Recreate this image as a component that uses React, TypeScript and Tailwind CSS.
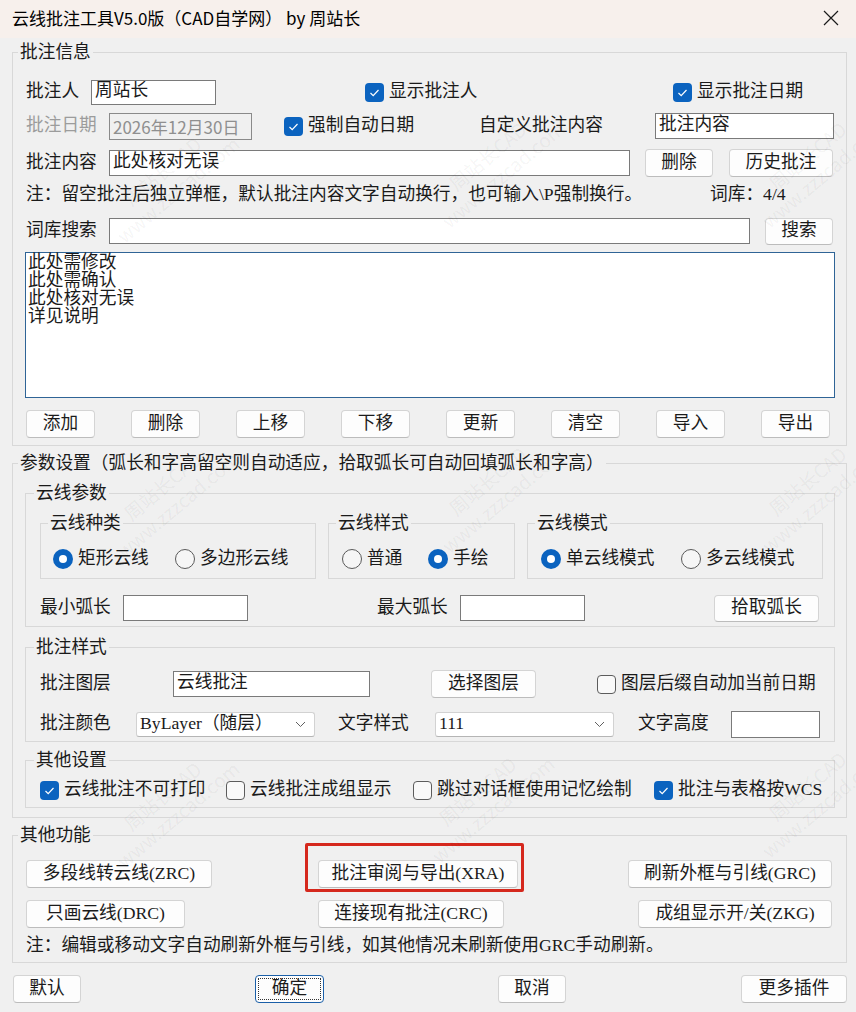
import React from 'react';

type Kids = { children?: React.ReactNode; className?: string };

const WATERMARKS = [
  'left-[170px] top-[180px]',
  'left-[495px] top-[165px]',
  'left-[815px] top-[165px]',
  'left-[170px] top-[495px]',
  'left-[495px] top-[490px]',
  'left-[815px] top-[490px]',
  'left-[170px] top-[805px]',
  'left-[485px] top-[800px]',
  'left-[815px] top-[795px]',
];

function Group({
  title,
  className = '',
  legendClass = 'ml-[5px]',
  children,
}: Kids & { title: string; legendClass?: string }) {
  return (
    <fieldset className={`shrink-0 border border-[#d8d8d8] ${className}`}>
      <legend className={`${legendClass} px-[2px] leading-[20px] whitespace-nowrap`}>{title}</legend>
      {children}
    </fieldset>
  );
}

function Btn({ className = '', children }: Kids) {
  return (
    <button
      type="button"
      className={`relative shrink-0 flex items-center justify-center bg-[#fdfdfd] border border-[#d4d4d4] border-b-[#bcbcbc] rounded-[4px] leading-none whitespace-nowrap text-[#1b1b1b] ${className}`}
    >
      {children}
    </button>
  );
}

function Field({ className = '', value = '' }: { className?: string; value?: string }) {
  return (
    <div
      className={`shrink-0 flex items-center bg-white border border-[#7a7a7a] pl-[3px] pb-[2px] leading-none whitespace-nowrap overflow-hidden ${className}`}
    >
      {value}
    </div>
  );
}

function Combo({ className = '', value }: { className?: string; value: string }) {
  return (
    <div
      className={`shrink-0 flex items-center justify-between bg-white border border-[#d2d2d2] border-b-[#b5b5b5] rounded-[3px] pl-[3px] pr-[8px] leading-none whitespace-nowrap ${className}`}
    >
      <span>{value}</span>
      <svg width="11" height="7" viewBox="0 0 11 7" fill="none">
        <path d="M1 1 L5.5 5.5 L10 1" stroke="#606060" strokeWidth="1" />
      </svg>
    </div>
  );
}

function Check({ checked, label, className = '' }: { checked?: boolean; label: string; className?: string }) {
  return (
    <div className={`shrink-0 flex items-center leading-none ${className}`}>
      {checked ? (
        <span className="w-[19px] h-[19px] rounded-[4px] bg-[#0b63bf] flex items-center justify-center">
          <svg width="19" height="19" viewBox="0 0 19 19" fill="none">
            <path d="M5.5 10 L8.2 12.7 L13.5 7" stroke="#ffffff" strokeWidth="1.2" />
          </svg>
        </span>
      ) : (
        <span className="w-[19px] h-[19px] rounded-[4px] border border-[#5c5c5c] bg-[#f9f9f9]" />
      )}
      <span className="ml-[5px] whitespace-nowrap">{label}</span>
    </div>
  );
}

function Radio({ checked, label, className = '' }: { checked?: boolean; label: string; className?: string }) {
  return (
    <div className={`shrink-0 flex items-center leading-none ${className}`}>
      {checked ? (
        <span className="w-[20px] h-[20px] rounded-full bg-[#0b63bf] flex items-center justify-center">
          <span className="w-[8px] h-[8px] rounded-full bg-white" />
        </span>
      ) : (
        <span className="w-[20px] h-[20px] rounded-full border border-[#5a5a5a] bg-[#f6f6f6]" />
      )}
      <span className="ml-[5px] whitespace-nowrap">{label}</span>
    </div>
  );
}

function Label({ className = '', children }: Kids) {
  return <span className={`shrink-0 whitespace-nowrap leading-none ${className}`}>{children}</span>;
}

export default function App() {
  const words = ['此处需修改', '此处需确认', '此处核对无误', '详见说明'];
  const listButtons = ['添加', '删除', '上移', '下移', '更新', '清空', '导入', '导出'];

  return (
    <div className="relative w-[856px] h-[1012px] overflow-hidden bg-[#f0f0f0] text-[17.7px] text-[#1a1a1a] font-['Liberation_Serif','Noto_Sans_CJK_SC',serif]">
      {/* Title bar */}
      <div className="h-[38px] bg-[#f7f0ec] flex items-center pl-[12px] pr-[17px] pb-[3px]">
        <span className="font-['Noto_Sans_CJK_SC',sans-serif] text-[17px] leading-none text-black">
          云线批注工具V5.0版（CAD自学网） by 周站长
        </span>
        <svg className="ml-auto" width="16" height="16" viewBox="0 0 16 16" fill="none">
          <path d="M1 1 L15 15 M15 1 L1 15" stroke="#1a1a1a" strokeWidth="1.2" />
        </svg>
      </div>

      {/* 批注信息 */}
      <Group title="批注信息" className="ml-[12px] mt-[4px] w-[835px]">
        <div className="pl-[13px] pb-[7px]">
          <div className="mt-[15px] h-[30px] flex items-center">
            <Label className="w-[65px]">批注人</Label>
            <Field className="w-[125px] h-[25px]" value="周站长" />
            <Check checked label="显示批注人" className="ml-[149px] w-[308px]" />
            <Check checked label="显示批注日期" />
          </div>
          <div className="mt-[4px] h-[30px] flex items-center">
            <Label className="w-[83px] text-[#9c9c9c]">批注日期</Label>
            <div className="shrink-0 w-[143px] h-[27px] flex items-center pl-[3px] bg-[#f0f0f0] border border-[#8a8a8a] text-[#8f8f8f] text-[17px] leading-none font-['Noto_Sans_CJK_SC',sans-serif]">
              2026年12月30日
            </div>
            <Check checked label="强制自动日期" className="ml-[32px] w-[195px]" />
            <Label className="w-[176px]">自定义批注内容</Label>
            <Field className="w-[179px] h-[26px]" value="批注内容" />
          </div>
          <div className="mt-[7px] h-[30px] flex items-center">
            <Label className="w-[83px]">批注内容</Label>
            <Field className="w-[521px] h-[26px]" value="此处核对无误" />
            <Btn className="ml-[15px] w-[68px] h-[28px]">删除</Btn>
            <Btn className="ml-[16px] w-[104px] h-[28px]">历史批注</Btn>
          </div>
          <div className="mt-[6px] h-[22px] flex items-center">
            <Label className="w-[684px]">{'注：留空批注后独立弹框，默认批注内容文字自动换行，也可输入\\P强制换行。'}</Label>
            <Label>词库：4/4</Label>
          </div>
          <div className="mt-[10px] h-[30px] flex items-center">
            <Label className="w-[83px]">词库搜索</Label>
            <Field className="w-[641px] h-[26px]" />
            <Btn className="ml-[15px] w-[68px] h-[27px]">搜索</Btn>
          </div>
          <div className="mt-[6px] -ml-[1px] w-[810px] h-[146px] bg-white border border-[#2f6496] pl-[2px] leading-[18px]">
            {words.map((w) => (
              <div key={w} className="whitespace-nowrap">
                {w}
              </div>
            ))}
          </div>
          <div className="mt-[12px] flex gap-[36px]">
            {listButtons.map((b) => (
              <Btn key={b} className="w-[69px] h-[28px]">
                {b}
              </Btn>
            ))}
          </div>
        </div>
      </Group>

      {/* 参数设置 */}
      <Group
        title="参数设置（弧长和字高留空则自动适应，拾取弧长可自动回填弧长和字高）"
        className="ml-[12px] mt-[7px] w-[835px]"
      >
        <div className="pb-[9px]">
          <Group title="云线参数" legendClass="ml-[8px]" className="ml-[12px] mt-[10px] w-[810px]">
            <div className="pb-[4px]">
              <div className="mt-[10px] ml-[14px] flex items-start">
                <Group title="云线种类" legendClass="ml-[7px]" className="w-[276px]">
                  <div className="mt-[12px] h-[28px] mb-[5px] pl-[12px] flex items-center">
                    <Radio checked label="矩形云线" className="w-[122px]" />
                    <Radio label="多边形云线" />
                  </div>
                </Group>
                <Group title="云线样式" legendClass="ml-[7px]" className="ml-[12px] w-[187px]">
                  <div className="mt-[12px] h-[28px] mb-[5px] pl-[13px] flex items-center">
                    <Radio label="普通" className="w-[86px]" />
                    <Radio checked label="手绘" />
                  </div>
                </Group>
                <Group title="云线模式" legendClass="ml-[7px]" className="ml-[12px] w-[296px]">
                  <div className="mt-[12px] h-[28px] mb-[5px] pl-[13px] flex items-center">
                    <Radio checked label="单云线模式" className="w-[140px]" />
                    <Radio label="多云线模式" />
                  </div>
                </Group>
              </div>
              <div className="mt-[15px] ml-[14px] h-[28px] flex items-center">
                <Label className="w-[83px]">最小弧长</Label>
                <Field className="w-[125px] h-[26px]" />
                <Label className="ml-[129px] w-[83px]">最大弧长</Label>
                <Field className="w-[125px] h-[26px]" />
                <Btn className="ml-[129px] w-[105px] h-[27px]">拾取弧长</Btn>
              </div>
            </div>
          </Group>

          <Group title="批注样式" legendClass="ml-[8px]" className="ml-[12px] mt-[10px] w-[810px]">
            <div className="pb-[3px] pl-[14px]">
              <div className="mt-[13px] h-[28px] flex items-center">
                <Label className="w-[133px]">批注图层</Label>
                <Field className="w-[197px] h-[26px]" value="云线批注" />
                <Btn className="ml-[61px] w-[105px] h-[28px]">选择图层</Btn>
                <Check label="图层后缀自动加当前日期" className="ml-[61px]" />
              </div>
              <div className="mt-[12px] h-[28px] flex items-center">
                <Label className="w-[96px]">批注颜色</Label>
                <Combo className="w-[179px] h-[25px]" value="ByLayer（随层）" />
                <Label className="ml-[23px] w-[97px]">文字样式</Label>
                <Combo className="w-[179px] h-[25px]" value="111" />
                <Label className="ml-[24px] w-[93px]">文字高度</Label>
                <Field className="w-[89px] h-[27px]" />
              </div>
            </div>
          </Group>

          <Group title="其他设置" legendClass="ml-[8px]" className="ml-[12px] mt-[8px] w-[810px]">
            <div className="mt-[7px] mb-[4px] ml-[14px] h-[26px] flex items-center">
              <Check checked label="云线批注不可打印" className="w-[186px]" />
              <Check label="云线批注成组显示" className="w-[187px]" />
              <Check label="跳过对话框使用记忆绘制" className="w-[241px]" />
              <Check checked label="批注与表格按WCS" />
            </div>
          </Group>
        </div>
      </Group>

      {/* 其他功能 */}
      <Group title="其他功能" className="ml-[12px] mt-[7px] w-[835px]">
        <div className="pl-[13px] pb-[4px]">
          <div className="mt-[15px] h-[28px] flex items-center">
            <Btn className="w-[186px] h-[28px]">多段线转云线(ZRC)</Btn>
            <Btn className="ml-[106px] w-[200px] h-[28px]">
              批注审阅与导出(XRA)
              <span className="absolute -left-[14px] -top-[18px] w-[219px] h-[49px] border-[3px] border-[#d5281d] rounded-[2px] pointer-events-none" />
            </Btn>
            <Btn className="ml-[110px] w-[204px] h-[28px]">刷新外框与引线(GRC)</Btn>
          </div>
          <div className="mt-[12px] h-[28px] flex items-center">
            <Btn className="w-[159px] h-[28px]">只画云线(DRC)</Btn>
            <Btn className="ml-[133px] w-[186px] h-[28px]">连接现有批注(CRC)</Btn>
            <Btn className="ml-[134px] w-[194px] h-[28px]">成组显示开/关(ZKG)</Btn>
          </div>
          <div className="mt-[6px] h-[24px] flex items-center">
            <Label>注：编辑或移动文字自动刷新外框与引线，如其他情况未刷新使用GRC手动刷新。</Label>
          </div>
        </div>
      </Group>

      {/* Dialog buttons */}
      <div className="mt-[12px] flex items-center">
        <Btn className="ml-[13px] w-[68px] h-[28px]">默认</Btn>
        <button
          type="button"
          className="ml-[174px] shrink-0 w-[69px] h-[28px] p-[2px] bg-[#fdfdfd] border border-[#1a5fa8] rounded-[4px] leading-none text-[#1b1b1b]"
        >
          <span className="w-full h-full flex items-center justify-center border border-dotted border-[#333333]">
            确定
          </span>
        </button>
        <Btn className="ml-[174px] w-[68px] h-[28px]">取消</Btn>
        <Btn className="ml-[175px] w-[106px] h-[28px]">更多插件</Btn>
      </div>

      {/* Watermarks */}
      <div className="absolute inset-0 pointer-events-none overflow-hidden">
        {WATERMARKS.map((pos) => (
          <div
            key={pos}
            className={`absolute ${pos} -translate-x-1/2 -translate-y-1/2 -rotate-[40deg] flex flex-col items-center text-[19px] leading-[24px] whitespace-nowrap text-black/[0.055] font-['Noto_Sans_CJK_SC',sans-serif]`}
          >
            <span>周站长CAD</span>
            <span>www.zzzcad.com</span>
          </div>
        ))}
      </div>
    </div>
  );
}
